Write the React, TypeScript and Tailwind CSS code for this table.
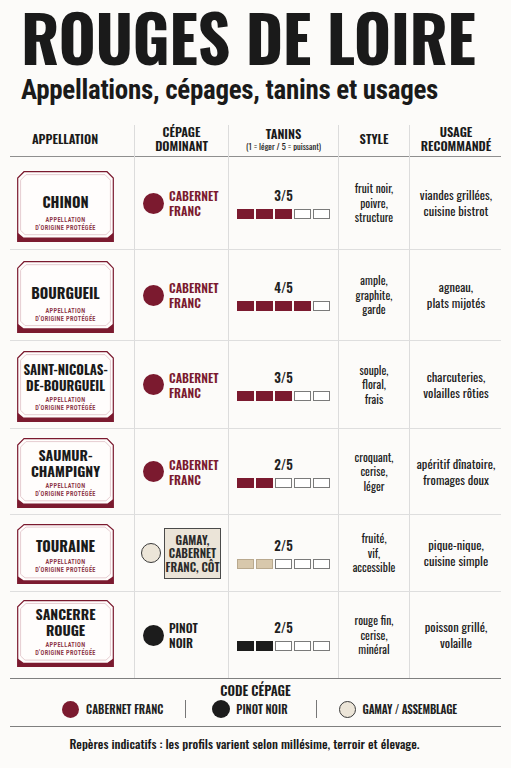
type Grape = "cf" | "pinot" | "gamay";

interface Row {
  name: string[];
  nameCls: string;
  h: string;
  lh: string;
  pb: string;
  grape: Grape;
  t: number;
  style: string[];
  usage: string[];
}

const rows: Row[] = [
  { name: ["CHINON"], nameCls: "text-[14.5px] mb-[7px]", h: "h-[93px]", lh: "h-[71px]", pb: "pb-[7px]", grape: "cf", t: 3, style: ["fruit noir,", "poivre,", "structure"], usage: ["viandes grillées,", "cuisine bistrot"] },
  { name: ["BOURGUEIL"], nameCls: "text-[14.5px] mb-[7px]", h: "h-[91px]", lh: "h-[72px]", pb: "pb-[7px]", grape: "cf", t: 4, style: ["ample,", "graphite,", "garde"], usage: ["agneau,", "plats mijotés"] },
  { name: ["SAINT-NICOLAS-", "DE-BOURGUEIL"], nameCls: "text-[13px] mb-[4px]", h: "h-[88px]", lh: "h-[71px]", pb: "pb-[6px]", grape: "cf", t: 3, style: ["souple,", "floral,", "frais"], usage: ["charcuteries,", "volailles rôties"] },
  { name: ["SAUMUR-", "CHAMPIGNY"], nameCls: "text-[14px] mb-[4px]", h: "h-[86px]", lh: "h-[70px]", pb: "pb-[6px]", grape: "cf", t: 2, style: ["croquant,", "cerise,", "léger"], usage: ["apéritif dînatoire,", "fromages doux"] },
  { name: ["TOURAINE"], nameCls: "text-[14.5px] mb-[5px]", h: "h-[77px]", lh: "h-[60px]", pb: "pb-[7px]", grape: "gamay", t: 2, style: ["fruité,", "vif,", "accessible"], usage: ["pique-nique,", "cuisine simple"] },
  { name: ["SANCERRE", "ROUGE"], nameCls: "text-[14px] mb-[4px]", h: "h-[86px]", lh: "h-[67px]", pb: "pb-[11px]", grape: "pinot", t: 2, style: ["rouge fin,", "cerise,", "minéral"], usage: ["poisson grillé,", "volaille"] },
];

function Label({ name, lh, nameCls }: { name: string[]; lh: string; nameCls: string }) {
  return (
    <div className={`relative w-[97px] ${lh}`}>
      <svg viewBox="0 0 97 70" preserveAspectRatio="none" className="absolute inset-0 h-full w-full">
        <path d="M7,0.7 H90 L96.3,7 V69.3 H0.7 V7 Z" fill="#fffdfc" stroke="#7b1a2f" strokeWidth="1.2" vectorEffect="non-scaling-stroke" />
        <path d="M0.7,61 L6.5,65.5 H90.5 L96.3,61 V70 H0.7 Z" fill="#7b1a2f" />
        <path d="M9,3.6 H88 L93.4,9 V58.5 L89,62.8 H8 L3.6,58.5 V9 Z" fill="none" stroke="#e6cdd1" strokeWidth="1" vectorEffect="non-scaling-stroke" />
      </svg>
      <div className="relative flex h-full flex-col items-center justify-end pb-[9px]">
        <div className={`whitespace-nowrap text-center font-bold leading-[16px] text-[#1a1a1a] ${nameCls}`}>
          {name.map((n) => (
            <div key={n}>{n}</div>
          ))}
        </div>
        <div className="whitespace-nowrap text-center font-['Roboto_Condensed',sans-serif] text-[6.3px] font-semibold leading-[7.8px] tracking-[0.35px] text-[#8c3445]">
          <div>APPELLATION</div>
          <div>D'ORIGINE PROTÉGÉE</div>
        </div>
      </div>
    </div>
  );
}

function Dot({ grape, size }: { grape: Grape; size: string }) {
  if (grape === "cf") return <div className={`${size} shrink-0 rounded-full bg-[#7b1a2f]`} />;
  if (grape === "pinot") return <div className={`${size} shrink-0 rounded-full bg-[#1c1c1c]`} />;
  return <div className={`${size} shrink-0 rounded-full border-[1.5px] border-[#3a3a3a] bg-[#ece5d8]`} />;
}

function Cepage({ grape }: { grape: Grape }) {
  if (grape === "gamay") {
    return (
      <div className="flex items-center gap-[3px] pl-[6px]">
        <Dot grape="gamay" size="h-[20px] w-[20px]" />
        <div className="flex h-[51px] w-[57px] flex-col items-center justify-center border-[1.5px] border-[#4a4a4a] bg-[#ebe4d8] text-center text-[11.5px] font-semibold leading-[13.5px] text-[#2a2a2a]">
          <div>GAMAY,</div>
          <div>CABERNET</div>
          <div>FRANC, CÔT</div>
        </div>
      </div>
    );
  }
  const cf = grape === "cf";
  return (
    <div className="flex items-center gap-[5px] pl-[8px]">
      <Dot grape={grape} size="h-[21px] w-[21px]" />
      <div className={`text-[12px] font-semibold leading-[15px] ${cf ? "text-[#7b1a2f]" : "text-[#1c1c1c]"}`}>
        <div>{cf ? "CABERNET" : "PINOT"}</div>
        <div>{cf ? "FRANC" : "NOIR"}</div>
      </div>
    </div>
  );
}

function Tanins({ t, grape }: { t: number; grape: Grape }) {
  const fill = grape === "cf" ? "bg-[#7b1a2f] border-[#7b1a2f]" : grape === "pinot" ? "bg-[#1c1c1c] border-[#1c1c1c]" : "bg-[#d8c8ac] border-[#b9a98e]";
  return (
    <div className="flex flex-col items-center">
      <div className="text-[13px] font-semibold leading-[16px] text-[#1f1f1f]">{t}/5</div>
      <div className="mt-[6px] flex gap-[2px]">
        {[0, 1, 2, 3, 4].map((i) => (
          <div key={i} className={`h-[10px] w-[17px] border ${i < t ? fill : "border-[#7a7a7a] bg-white"}`} />
        ))}
      </div>
    </div>
  );
}

export default function App() {
  return (
    <div className="min-h-[768px] w-[511px] bg-[#fcfbf9] font-['Oswald','Roboto_Condensed',sans-serif] text-[#1f1f1f]">
      <div className="px-[21px] pt-[1px]">
        <div className="whitespace-nowrap text-[64px] font-bold leading-[70px] tracking-[-0.5px] text-[#1a1a1a]">
          ROUGES DE LOIRE
        </div>
        <div className="mt-[4px] whitespace-nowrap font-['Roboto_Condensed',sans-serif] text-[27px] font-bold leading-[30px] tracking-[-0.3px] text-[#1a1a1a]">
          Appellations, cépages, tanins et usages
        </div>
      </div>

      <div className="mx-[10px] mt-[13px]">
        <div className="grid h-[39px] grid-cols-[124px_94px_110px_71px_93px] border-b-[1.5px] border-[#8f8f8f] text-center text-[12.5px] font-semibold leading-[14px] text-[#1a1a1a]">
          <div className="flex items-center justify-center pr-[14px]">APPELLATION</div>
          <div className="mt-[7px] flex flex-col items-center justify-center border-l border-[#dcdcdc] pb-[7px]">
            <div>CÉPAGE</div>
            <div>DOMINANT</div>
          </div>
          <div className="mt-[7px] flex flex-col items-center justify-center border-l border-[#dcdcdc] pb-[7px]">
            <div>TANINS</div>
            <div className="text-[8.5px] font-normal leading-[11px]">(1 = léger / 5 = puissant)</div>
          </div>
          <div className="mt-[7px] flex items-center justify-center border-l border-[#dcdcdc] pb-[7px]">STYLE</div>
          <div className="mt-[7px] flex flex-col items-center justify-center border-l border-[#dcdcdc] pb-[7px]">
            <div>USAGE</div>
            <div>RECOMMANDÉ</div>
          </div>
        </div>

        {rows.map((r, idx) => (
          <div
            key={r.name.join("")}
            className={`grid ${r.h} grid-cols-[124px_94px_110px_71px_93px] ${idx < rows.length - 1 ? "border-b border-[#dedede]" : ""}`}
          >
            <div className={`flex items-end pl-[7px] ${r.pb}`}>
              <Label name={r.name} lh={r.lh} nameCls={r.nameCls} />
            </div>
            <div className="flex items-center border-l border-[#dcdcdc]">
              <Cepage grape={r.grape} />
            </div>
            <div className="flex items-center justify-center border-l border-[#dcdcdc]">
              <Tanins t={r.t} grape={r.grape} />
            </div>
            <div className="flex flex-col items-center justify-center border-l border-[#dcdcdc] text-center text-[11.5px] font-normal leading-[14.5px] text-[#222]">
              {r.style.map((s) => (
                <div key={s}>{s}</div>
              ))}
            </div>
            <div className="flex flex-col items-center justify-center border-l border-[#dcdcdc] text-center text-[12.5px] font-normal leading-[16px] text-[#222]">
              {r.usage.map((s) => (
                <div key={s}>{s}</div>
              ))}
            </div>
          </div>
        ))}

        <div className="border-t-[1.5px] border-b-[1.5px] border-[#7f7f7f] pb-[8px] pt-[3px]">
          <div className="text-center text-[13px] font-semibold leading-[16px] text-[#1a1a1a]">CODE CÉPAGE</div>
          <div className="mt-[2px] flex items-center justify-center pl-[8px] text-[11px] font-semibold leading-[14px] text-[#1f1f1f]">
            <div className="flex items-center gap-[7px]">
              <Dot grape="cf" size="h-[17px] w-[17px]" />
              <span>CABERNET FRANC</span>
            </div>
            <div className="ml-[22px] mr-[26px] h-[18px] w-px bg-[#777]" />
            <div className="flex items-center gap-[6px]">
              <Dot grape="pinot" size="h-[18px] w-[18px]" />
              <span>PINOT NOIR</span>
            </div>
            <div className="ml-[28px] mr-[22px] h-[18px] w-px bg-[#777]" />
            <div className="flex items-center gap-[7px]">
              <Dot grape="gamay" size="h-[17px] w-[17px]" />
              <span className="tracking-[-0.2px]">GAMAY / ASSEMBLAGE</span>
            </div>
          </div>
        </div>

        <div className="pr-[22px] pt-[9px] text-center text-[12.5px] font-medium leading-[16px] text-[#1a1a1a]">
          Repères indicatifs : les profils varient selon millésime, terroir et élevage.
        </div>
      </div>
    </div>
  );
}
